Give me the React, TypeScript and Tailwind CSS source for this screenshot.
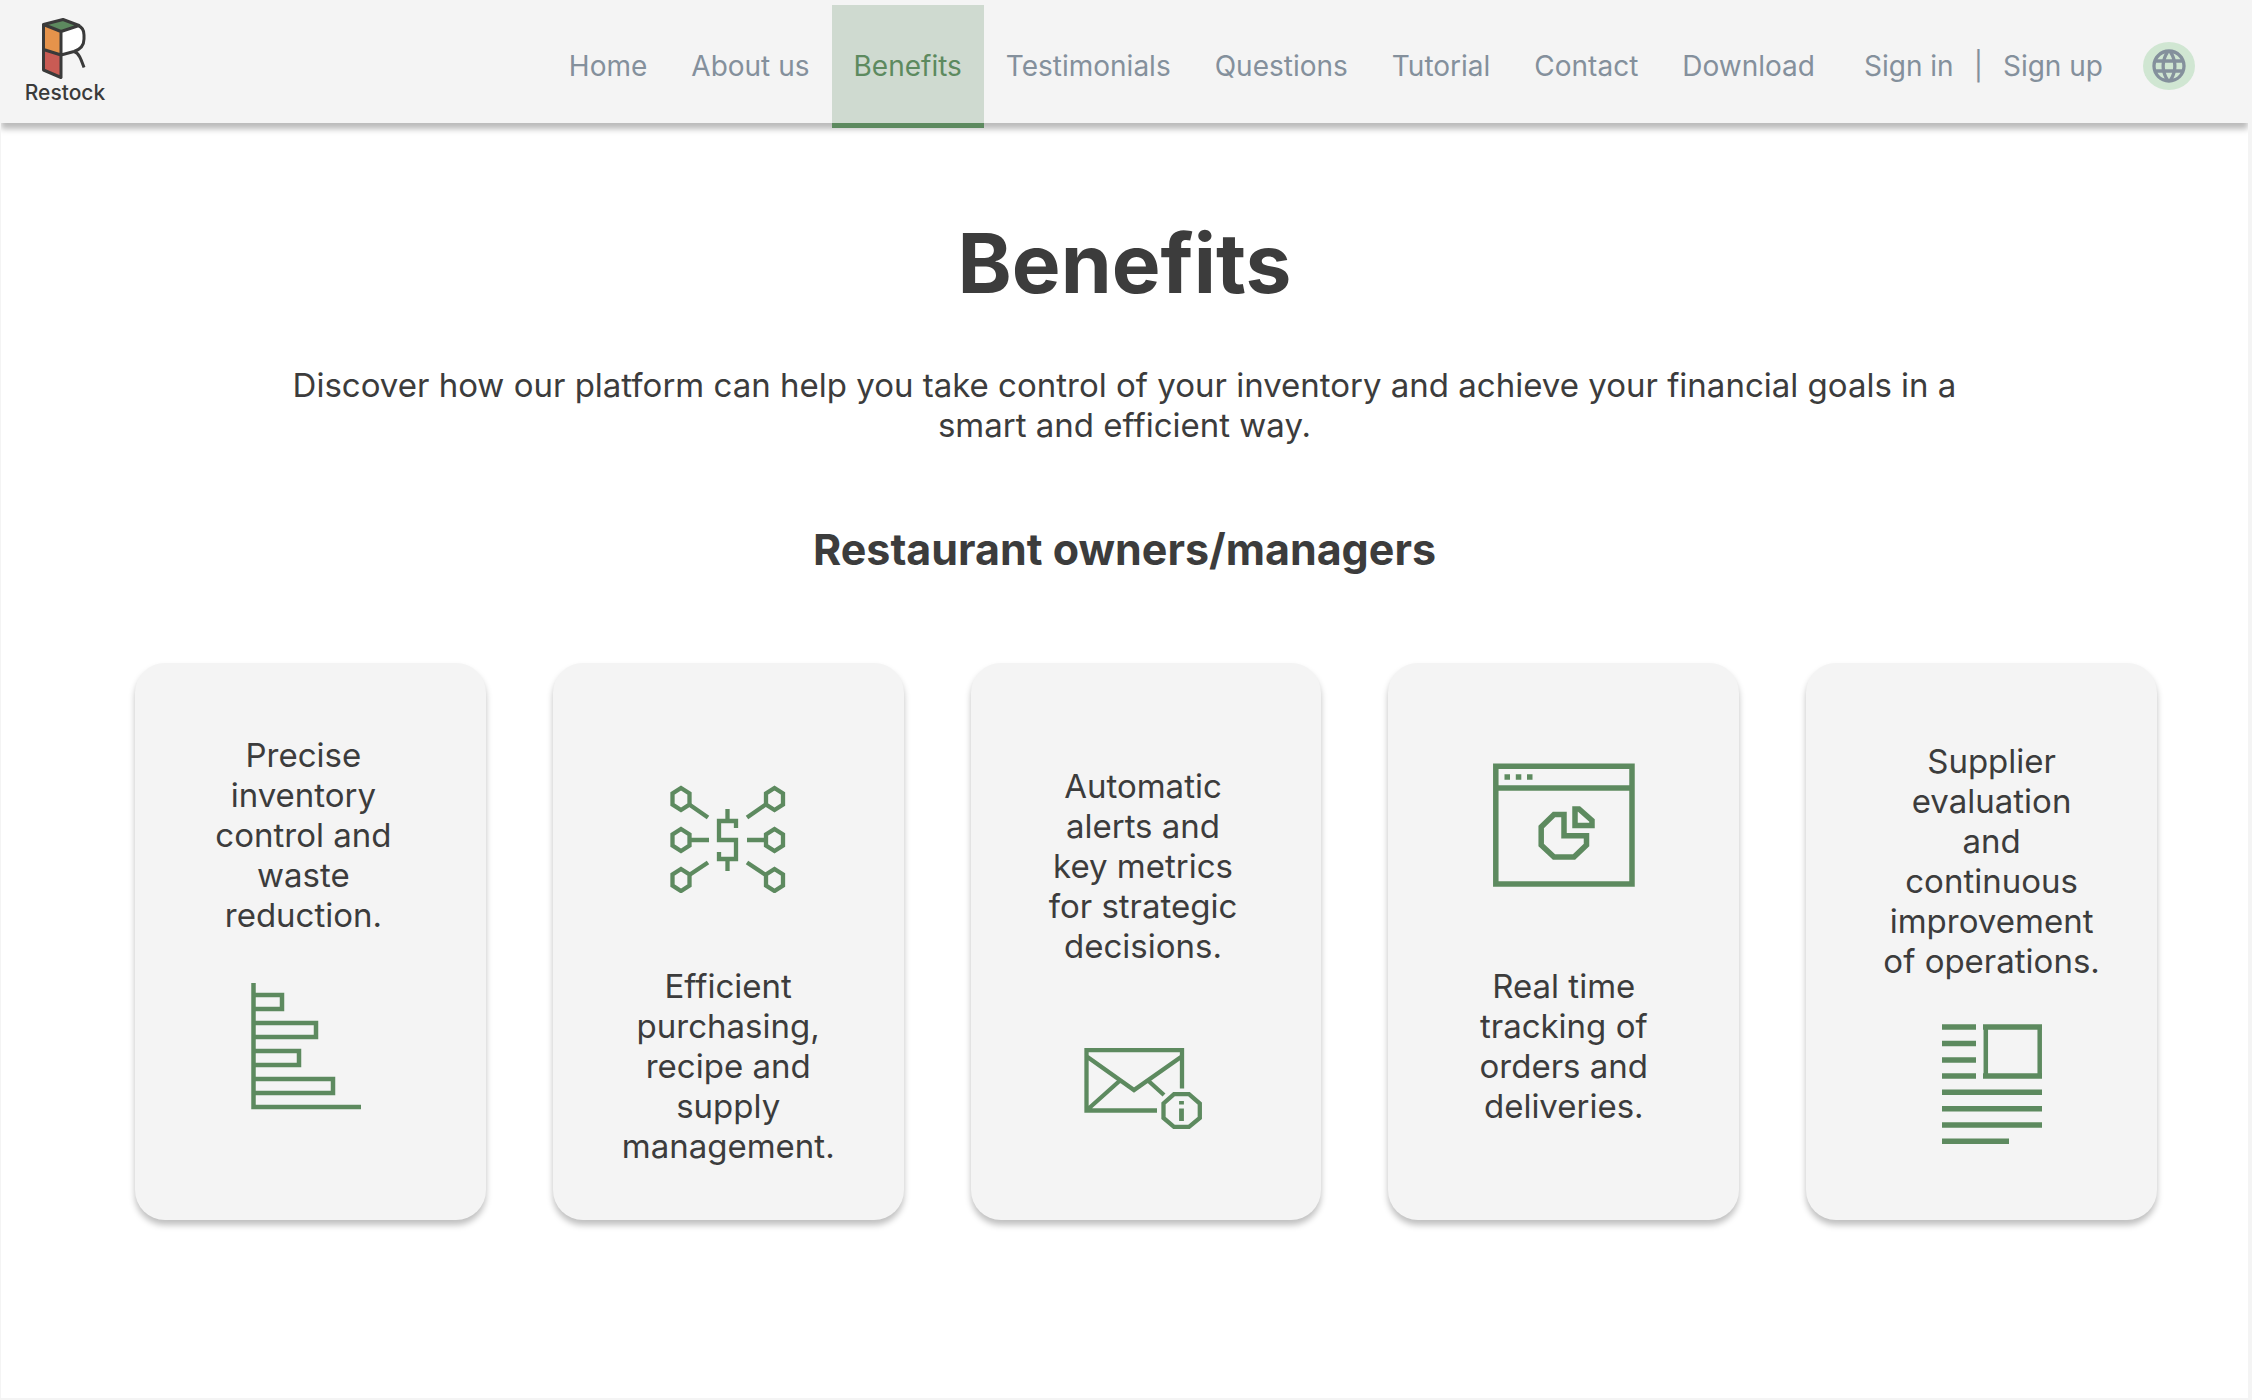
import type { ReactNode } from "react";
import { MdLanguage } from "react-icons/md";

const navLinks = ["Home", "About us", "Benefits", "Testimonials", "Questions", "Tutorial", "Contact", "Download"];

function Logo() {
  return (
    <a href="#home" className="flex w-[78px] flex-col items-center text-[21px] leading-6 font-medium text-[#3a3a3a]">
      <svg width="46" height="64" viewBox="42 17 46 64" fill="none" aria-hidden="true">
        <path d="M44 25 61 31V78L44 70Z" fill="#c95b54" />
        <path d="M44 25 61 31V54L44 49Z" fill="#e6934b" />
        <path d="M61 31 78 25.500C86 28 84 37 84 37C84 46 79 50 73 51.500L61 54Z" fill="#fff" />
        <path d="M44 24.500 63 19.500 79 25.500 61 31.500Z" fill="#5d8a5f" />
        <path
          d="M43.500 24.500 63 19.500 79 25.500 61 31.500ZM43.500 24.500V70L61 77.500V31.500M43.500 49.500 61 55 74 51.500C80 49.500 84 45 84 39V35C84 30 82 27 78 25.500M74 51.500C79 53 81 59 84 67.500"
          stroke="#3a3a3a"
          strokeWidth="3"
          strokeLinejoin="round"
        />
      </svg>
      Restock
    </a>
  );
}

function BarsIcon() {
  return (
    <svg width="116" height="127" viewBox="-6 0 116 127" fill="none" stroke="#5d8a5f" strokeWidth="4.500" aria-hidden="true">
      <path d="M2.500 0V124H110M2.500 12H31V26H2.500M2.500 40H65V54H2.500M2.500 68H48V82H2.500M2.500 96H82V110H2.500" />
    </svg>
  );
}

function NetworkIcon() {
  return (
    <svg width="116" height="108" viewBox="670 785 116 108" fill="none" stroke="#5d8a5f" strokeWidth="4.300" aria-hidden="true">
      <path d="M681 788 689.500 793.500V804.500L681 810 672.500 804.500V793.500ZM681 829 689.500 834.500V845.500L681 851 672.500 845.500V834.500ZM681 869 689.500 874.500V885.500L681 891 672.500 885.500V874.500Z" />
      <path d="M774.500 788 783 793.500V804.500L774.500 810 766 804.500V793.500ZM774.500 829 783 834.500V845.500L774.500 851 766 845.500V834.500ZM774.500 869 783 874.500V885.500L774.500 891 766 885.500V874.500Z" />
      <path d="M690 805 708 817.500M691 840H709M690 874.500 708 862.500M765 805 747 817.500M765 840H747M765 874.500 747 862.500" />
      <path d="M727.500 809V821M736 828V821H719V840H736V859H719V852M727.500 859V871" />
    </svg>
  );
}

function MailIcon() {
  return (
    <svg width="120" height="82" viewBox="1083 1048 120 82" fill="none" stroke="#5d8a5f" strokeWidth="4.300" aria-hidden="true">
      <path d="M1182 1088.500V1050.200H1086.500V1110.500H1157M1087.500 1057 1134 1090 1181 1057M1087 1110 1120 1080.500M1148 1080.500 1164 1095" />
      <path d="M1174 1094.200H1189L1199.800 1103.500V1118L1189 1126.800H1174L1163.500 1118V1103.500Z" />
      <path d="M1181.500 1101V1104.500M1181.500 1108.500V1121" strokeWidth="4.800" />
    </svg>
  );
}

function DashboardIcon() {
  return (
    <svg width="142" height="124" viewBox="1493 763 142 124" fill="none" stroke="#5d8a5f" strokeWidth="5.500" aria-hidden="true">
      <path d="M1495.800 766.300H1632V884H1495.800ZM1496 788H1632" />
      <path d="M1504.500 777H1510M1515.800 777H1521.300M1527 777H1532.500" />
      <path d="M1564 814.500V835.800H1586.500V845L1574 857H1554L1541.200 845V827L1554 814.500ZM1575 809V825.500H1592V820.500L1579 809Z" />
    </svg>
  );
}

function ArticleIcon() {
  return (
    <svg width="100" height="121" viewBox="0 0 100 121" fill="none" stroke="#5d8a5f" aria-hidden="true">
      <path d="M0 3H34M0 19.500H34M0 36H34M0 52H34M0 68.300H100M0 84.700H100M0 101H100M0 117.300H67" strokeWidth="5.500" />
      <path d="M41 3H100M41 52H100" strokeWidth="5.500" />
      <path d="M43.800 3V52M97.700 3V52" strokeWidth="4.500" />
    </svg>
  );
}

function Card({ className, children }: { className: string; children: ReactNode }) {
  return (
    <li
      className={`flex min-h-[557px] flex-col items-center rounded-[30px] bg-[#f4f4f4] text-center text-[33px] leading-10 shadow-[0_5px_6px_rgba(0,0,0,0.25)] ${className}`}
    >
      {children}
    </li>
  );
}

export default function App() {
  return (
    <div className="min-h-screen overflow-hidden border-r-4 border-b-2 border-l border-[#f4f4f4] bg-white font-['Inter',sans-serif] text-[#3c3c3c]">
      <header className="relative flex h-[123px] items-start bg-[#f4f4f4] pr-[53px] pl-[25px] shadow-[0_6px_6px_rgba(0,0,0,0.27)]">
        <div className="pt-[17px]">
          <Logo />
        </div>
        <nav className="ml-auto flex items-start pt-[5px] text-[28px] leading-9 text-[#84909c]">
          {navLinks.map((label) => (
            <a
              key={label}
              href="#benefits"
              aria-current={label === "Benefits" ? "page" : undefined}
              className={
                label === "Benefits"
                  ? "h-[123px] border-b-5 border-[#5d8a5f] bg-[#cfdad0] px-[22px] pt-[43px] text-[#5d8a5f]"
                  : "px-[22px] pt-[43px]"
              }
            >
              {label}
            </a>
          ))}
          <a href="#signin" className="ml-[27px] pt-[43px]">Sign in</a>
          <span className="px-[20px] pt-[43px]">|</span>
          <a href="#signup" className="pt-[43px]">Sign up</a>
        </nav>
        <button
          type="button"
          aria-label="Change language"
          className="mt-[42px] ml-[40px] flex h-12 w-[52px] items-center justify-center rounded-[50%] bg-[#d0e6d2] text-[#84909c]"
        >
          <MdLanguage size={40} />
        </button>
      </header>

      <main>
        <h1 className="pt-[93px] text-center text-[82px] leading-[96px] font-bold">Benefits</h1>
        <p className="mx-auto mt-[53px] max-w-[1720px] text-center text-[33px] leading-10">
          Discover how our platform can help you take control of your inventory and achieve your financial goals in a
          smart and efficient way.
        </p>
        <h2 className="mt-[78px] text-center text-[43px] leading-[52px] font-bold">Restaurant owners/managers</h2>
        <ul className="mt-[88px] grid grid-cols-5 gap-[67px] pr-[91px] pl-[134px]">
          <Card className="gap-[48px] pt-[72px] pr-[14px]">
            <p>
              Precise<br />inventory<br />control and<br />waste<br />reduction.
            </p>
            <BarsIcon />
          </Card>
          <Card className="gap-[73px] pt-[122px]">
            <NetworkIcon />
            <p>
              Efficient<br />purchasing,<br />recipe and<br />supply<br />management.
            </p>
          </Card>
          <Card className="gap-[82px] pt-[103px] pr-[6px]">
            <p>
              Automatic<br />alerts and<br />key metrics<br />for strategic<br />decisions.
            </p>
            <MailIcon />
          </Card>
          <Card className="gap-[79px] pt-[100px]">
            <DashboardIcon />
            <p>
              Real time<br />tracking of<br />orders and<br />deliveries.
            </p>
          </Card>
          <Card className="gap-[43px] pt-[78px] pl-[20px]">
            <p>
              Supplier<br />evaluation<br />and<br />continuous<br />improvement<br />of operations.
            </p>
            <ArticleIcon />
          </Card>
        </ul>
      </main>
    </div>
  );
}
